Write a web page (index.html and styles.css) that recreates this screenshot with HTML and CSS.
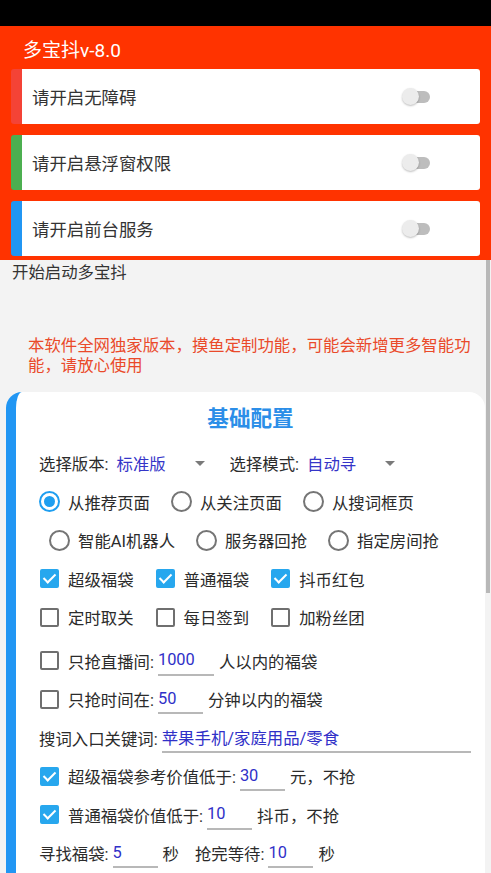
FILE: index.html
```html
<!DOCTYPE html>
<html lang="zh-CN">
<head>
  <meta charset="UTF-8">
  <meta name="viewport" content="width=device-width, initial-scale=1.0">
  <title>多宝抖v-8.0</title>
  <link rel="stylesheet" href="styles.css">
</head>
<body>
  <div class="status-bar"></div>

  <header class="top">
    <div class="app-title">多宝抖v-8.0</div>
    <div class="perm perm-red">
      <span>请开启无障碍</span>
      <span class="switch"><span class="track"></span><span class="thumb"></span></span>
    </div>
    <div class="perm perm-green">
      <span>请开启悬浮窗权限</span>
      <span class="switch"><span class="track"></span><span class="thumb"></span></span>
    </div>
    <div class="perm perm-blue">
      <span>请开启前台服务</span>
      <span class="switch"><span class="track"></span><span class="thumb"></span></span>
    </div>
  </header>

  <main class="content">
    <div class="scrollbar"></div>
    <p class="start">开始启动多宝抖</p>
    <p class="notice">本软件全网独家版本，摸鱼定制功能，可能会新增更多智能功能，请放心使用</p>

    <section class="config">
      <h2 class="config-title">基础配置</h2>

      <div class="row">
        <span>选择版本:</span>
        <span class="spinner"><span class="value">标准版</span><span class="arrow"></span></span>
        <span class="label-2">选择模式:</span>
        <span class="spinner"><span class="value">自动寻</span><span class="arrow"></span></span>
      </div>

      <div class="row options">
        <label class="opt"><span class="radio checked"></span>从推荐页面</label>
        <label class="opt"><span class="radio"></span>从关注页面</label>
        <label class="opt"><span class="radio"></span>从搜词框页</label>
      </div>

      <div class="row options indent">
        <label class="opt"><span class="radio"></span>智能AI机器人</label>
        <label class="opt"><span class="radio"></span>服务器回抢</label>
        <label class="opt"><span class="radio"></span>指定房间抢</label>
      </div>

      <div class="row options">
        <label class="opt"><span class="check checked"></span>超级福袋</label>
        <label class="opt"><span class="check checked"></span>普通福袋</label>
        <label class="opt"><span class="check checked"></span>抖币红包</label>
      </div>

      <div class="row options">
        <label class="opt"><span class="check"></span>定时取关</label>
        <label class="opt"><span class="check"></span>每日签到</label>
        <label class="opt"><span class="check"></span>加粉丝团</label>
      </div>

      <div class="row spaced">
        <span class="check"></span>
        <span>只抢直播间:</span>
        <input class="field w56" type="text" value="1000">
        <span class="after">人以内的福袋</span>
      </div>

      <div class="row">
        <span class="check"></span>
        <span>只抢时间在:</span>
        <input class="field w45" type="text" value="50">
        <span class="after">分钟以内的福袋</span>
      </div>

      <div class="row">
        <span>搜词入口关键词:</span>
        <input class="field wide" type="text" value="苹果手机/家庭用品/零食">
      </div>

      <div class="row">
        <span class="check checked"></span>
        <span>超级福袋参考价值低于:</span>
        <input class="field w45" type="text" value="30">
        <span class="after">元，不抢</span>
      </div>

      <div class="row">
        <span class="check checked"></span>
        <span>普通福袋价值低于:</span>
        <input class="field w45" type="text" value="10">
        <span class="after">抖币，不抢</span>
      </div>

      <div class="row">
        <span>寻找福袋:</span>
        <input class="field w45" type="text" value="5">
        <span class="after">秒</span>
        <span class="label-3">抢完等待:</span>
        <input class="field w45" type="text" value="10">
        <span class="after">秒</span>
      </div>
    </section>
  </main>
</body>
</html>
```

FILE: styles.css
```css
html, body {
  margin: 0;
  padding: 0;
  height: 100%;
  overflow: hidden;
  background: #f3f3f3;
  font-family: Roboto, "Noto Sans CJK SC", sans-serif;
  color: #2b2b2b;
}

.status-bar {
  height: 26px;
  background: #000;
}

/* red header with permission switches */
.top {
  background: #ff3300;
  padding: 12px 11px 4px 11px;
}

.app-title {
  color: #fff;
  font-size: 19px;
  line-height: 26px;
  padding-left: 12px;
  margin-bottom: 5px;
}

.perm {
  display: flex;
  align-items: center;
  height: 55px;
  background: #fff;
  border-left: 11px solid #f44336;
  border-radius: 3px;
  padding-left: 10px;
  margin-bottom: 11px;
  font-size: 17.4px;
  color: #333;
}

.perm:last-child {
  margin-bottom: 0;
}

.perm-green {
  border-left-color: #4caf50;
}

.perm-blue {
  border-left-color: #2196f3;
}

.switch {
  position: relative;
  width: 28px;
  height: 17px;
  margin-left: auto;
  margin-right: 50px;
}

.switch .track {
  position: absolute;
  right: 0;
  top: 3px;
  width: 22px;
  height: 12px;
  border-radius: 6px;
  background: #bdbdbd;
}

.switch .thumb {
  position: absolute;
  left: 0;
  top: 0;
  width: 17px;
  height: 17px;
  border-radius: 50%;
  background: #ececec;
  box-shadow: 0 1px 2px rgba(0, 0, 0, 0.25);
}

/* content */
.content {
  position: relative;
}

.scrollbar {
  position: absolute;
  right: 1px;
  top: 0;
  width: 4px;
  height: 333px;
  background: #b8b8b8;
}

.start {
  margin: 0;
  padding: 2px 0 0 12px;
  font-size: 16.4px;
  line-height: 22px;
  color: #333;
}

.notice {
  margin: 52px 0 0 0;
  padding: 0 10px 0 28px;
  font-size: 16.4px;
  line-height: 20px;
  color: #ea4a2a;
}

.config {
  margin: 16px 6px 0 6px;
  padding: 12px 0 40px 23px;
  background: #fff;
  border-left: 10px solid #2196f3;
  border-radius: 16px 16px 0 0;
  font-size: 16.4px;
  color: #2b2b2b;
}

.config-title {
  margin: 0 0 10px 0;
  padding-right: 23px;
  text-align: center;
  font-size: 21.6px;
  line-height: 30px;
  font-weight: bold;
  color: #2b8ee8;
}

.row {
  display: flex;
  align-items: center;
  height: 38.5px;
  white-space: nowrap;
}

.row.spaced {
  margin-top: 5px;
}

.spinner {
  display: flex;
  align-items: center;
  width: 98px;
  padding-left: 8px;
}

.spinner .value {
  color: #3535c8;
}

.spinner .arrow {
  margin-left: auto;
  margin-right: 10px;
  width: 0;
  height: 0;
  border-left: 5px solid transparent;
  border-right: 5px solid transparent;
  border-top: 5px solid #7a7a7a;
}

.label-2 {
  margin-left: 15px;
}

.label-3 {
  margin-left: 16px;
}

.options {
  gap: 21px;
}

.options.indent {
  padding-left: 10px;
}

.opt {
  display: flex;
  align-items: center;
}

.radio {
  box-sizing: border-box;
  width: 21px;
  height: 21px;
  border: 2px solid #757575;
  border-radius: 50%;
  margin-right: 8px;
  position: relative;
}

.radio.checked {
  border-color: #1e9ef0;
}

.radio.checked::after {
  content: "";
  position: absolute;
  left: 3px;
  top: 3px;
  width: 11px;
  height: 11px;
  border-radius: 50%;
  background: #1e9ef0;
}

.check {
  box-sizing: border-box;
  width: 19px;
  height: 19px;
  border: 2px solid #6f6f6f;
  border-radius: 2px;
  margin-left: 1px;
  margin-right: 9px;
  position: relative;
  flex-shrink: 0;
}

.check.checked {
  border-color: #27a7ee;
  background: #27a7ee;
}

.check.checked::after {
  content: "";
  position: absolute;
  left: 4px;
  top: 0px;
  width: 5px;
  height: 10px;
  border-right: 2px solid #fff;
  border-bottom: 2px solid #fff;
  transform: rotate(45deg);
}

.field {
  box-sizing: border-box;
  height: 30px;
  margin-left: 4px;
  padding: 0;
  border: none;
  border-bottom: 2px solid #b8b8b8;
  background: transparent;
  font: inherit;
  color: #3030c8;
  outline: none;
}

.w56 {
  width: 56px;
}

.w45 {
  width: 45px;
}

.wide {
  flex: 1;
  margin-right: 14px;
}

.after {
  margin-left: 5px;
}
```
